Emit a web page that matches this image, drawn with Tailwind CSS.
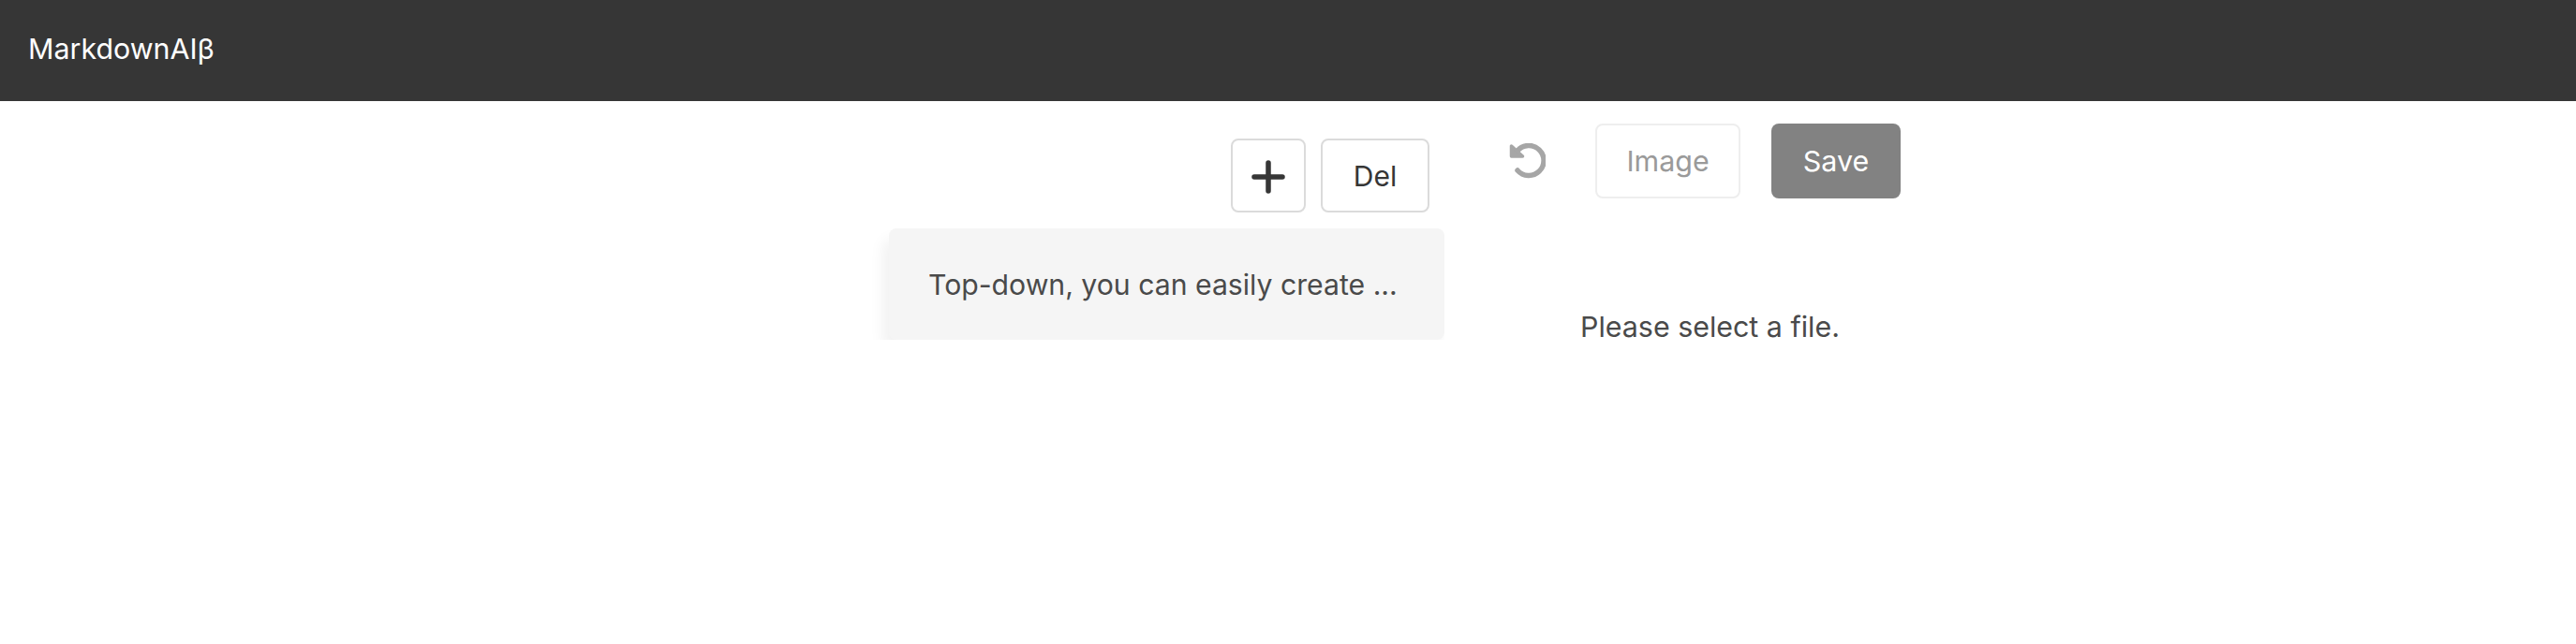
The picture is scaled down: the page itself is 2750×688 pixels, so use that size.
<!DOCTYPE html>
<html lang="en">
<head>
  <meta charset="UTF-8">
  <title>MarkdownAI</title>
  <script src="https://cdn.jsdelivr.net/npm/@tailwindcss/browser@4"></script>
</head>
<body class="bg-white font-['Inter',sans-serif] overflow-hidden">

  <!-- Navbar -->
  <header class="h-[108px] bg-[#363636] flex items-center pl-[30px] pb-[2px] text-white text-[30.4px]">
    <span>MarkdownAIβ</span>
  </header>

  <main class="flex pl-[919px]">
    <!-- File list -->
    <section class="w-[623px] shrink-0 h-[255px] overflow-hidden pl-[30px]">
      <div class="flex justify-end gap-[16px] pt-[40px] pr-[16px]">
        <button class="w-[80px] h-[79px] flex items-center justify-center border-2 border-[#dbdbdb] rounded-[8px] bg-white">
          <svg class="w-[36px] h-[36px] mt-[2px]" viewBox="0 0 36 36" fill="none" stroke="#363636" stroke-width="5.5" stroke-linecap="round">
            <path d="M18 3v30M3 18h30"/>
          </svg>
        </button>
        <button class="w-[116px] h-[79px] pt-[1px] border-2 border-[#dbdbdb] rounded-[8px] bg-white text-[#363636] text-[30px]">Del</button>
      </div>
      <div class="mt-[17px] h-[119px] bg-[#f5f5f5] rounded-[8px] pl-[42px] pt-[38px] text-[#4a4a4a] text-[30.2px] leading-[45px] shadow-[-6px_12px_16px_rgba(10,10,10,0.06)] whitespace-nowrap">Top-down, you can easily create ...</div>
    </section>

    <!-- Editor -->
    <section class="w-[601px] shrink-0">
      <div class="flex items-start pt-[24px]">
        <svg class="ml-[69px] mt-[21px] w-[39px] h-[39px]" viewBox="0 0 39 39" fill="none" stroke="#a6a6a6" stroke-width="5.5" stroke-linecap="round">
          <path d="M9 29A16 16 0 1 0 9 8"/>
          <path d="M2.5 3v11h12z" fill="#a6a6a6" stroke-width="3.5" stroke-linejoin="round"/>
        </svg>
        <button class="ml-[53px] w-[155px] h-[80px] pt-[2px] border-2 border-[#eeeeee] rounded-[8px] bg-white text-[#9a9a9a] text-[30.4px]">Image</button>
        <button class="ml-[33px] w-[138px] h-[80px] pt-[2px] rounded-[8px] bg-[#828282] text-white text-[30.4px]">Save</button>
      </div>
      <p class="ml-[145px] mt-[115px] text-[#4a4a4a] text-[30.4px] leading-[45px] whitespace-nowrap">Please select a file.</p>
    </section>
  </main>
</body>
</html>
